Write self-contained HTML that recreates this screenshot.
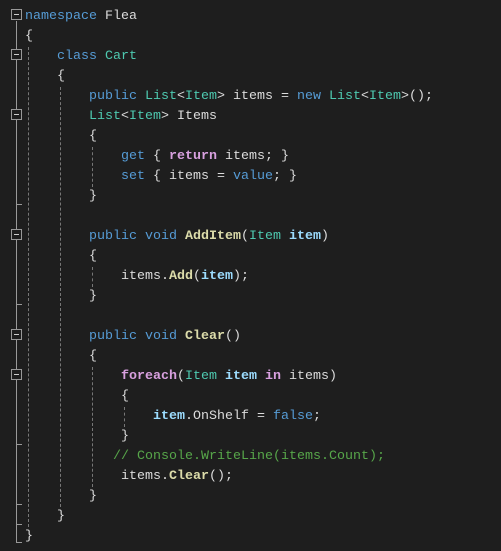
<!DOCTYPE html><html><head><meta charset="utf-8"><style>
body{margin:0;background:#1e1e1e;width:501px;height:551px;overflow:hidden;position:relative;font-family:"Liberation Mono",monospace;font-size:13.33px;color:#dcdcdc}
#w{position:absolute;left:0;top:2px;width:501px;height:549px}
.l{position:absolute;left:25px;height:20px;line-height:20px;white-space:pre}
.k{color:#569cd6}.t{color:#4ec9b0}.m{color:#dcdcaa;font-weight:bold}.p{color:#9cdcfe;font-weight:bold}.f{color:#d8a0df;font-weight:bold}.c{color:#57a64a}
.box{position:absolute;left:11px;width:9px;height:9px;border:1px solid #999;background:#1e1e1e}
.box:after{content:"";position:absolute;left:2px;top:4px;width:5px;height:1px;background:#ccc}
.vl{position:absolute;left:16px;width:1px;background:#999}
.tk{position:absolute;left:16px;width:6px;height:1px;background:#999}
.g{position:absolute;width:0;border-left:1px dashed #777}
</style></head><body><div id="w">
<div class="vl" style="top:19px;height:521px"></div>
<div class="tk" style="top:202px"></div><div class="tk" style="top:302px"></div><div class="tk" style="top:442px"></div><div class="tk" style="top:502px"></div><div class="tk" style="top:522px"></div><div class="tk" style="top:540px"></div>
<div class="box" style="top:7px"></div><div class="box" style="top:47px"></div><div class="box" style="top:107px"></div><div class="box" style="top:227px"></div><div class="box" style="top:327px"></div><div class="box" style="top:367px"></div>
<div class="g" style="left:28px;top:45px;height:480px"></div>
<div class="g" style="left:60px;top:85px;height:420px"></div>
<div class="g" style="left:92px;top:145px;height:40px"></div>
<div class="g" style="left:92px;top:265px;height:20px"></div>
<div class="g" style="left:92px;top:365px;height:120px"></div>
<div class="g" style="left:124px;top:405px;height:20px"></div>
<div class="l" style="top:5px"><span class="k">namespace</span> Flea</div>
<div class="l" style="top:25px">{</div>
<div class="l" style="top:45px">    <span class="k">class</span> <span class="t">Cart</span></div>
<div class="l" style="top:65px">    {</div>
<div class="l" style="top:85px">        <span class="k">public</span> <span class="t">List</span>&lt;<span class="t">Item</span>&gt; items = <span class="k">new</span> <span class="t">List</span>&lt;<span class="t">Item</span>&gt;();</div>
<div class="l" style="top:105px">        <span class="t">List</span>&lt;<span class="t">Item</span>&gt; Items</div>
<div class="l" style="top:125px">        {</div>
<div class="l" style="top:145px">            <span class="k">get</span> { <span class="f">return</span> items; }</div>
<div class="l" style="top:165px">            <span class="k">set</span> { items = <span class="k">value</span>; }</div>
<div class="l" style="top:185px">        }</div>
<div class="l" style="top:225px">        <span class="k">public</span> <span class="k">void</span> <span class="m">AddItem</span>(<span class="t">Item</span> <span class="p">item</span>)</div>
<div class="l" style="top:245px">        {</div>
<div class="l" style="top:265px">            items.<span class="m">Add</span>(<span class="p">item</span>);</div>
<div class="l" style="top:285px">        }</div>
<div class="l" style="top:325px">        <span class="k">public</span> <span class="k">void</span> <span class="m">Clear</span>()</div>
<div class="l" style="top:345px">        {</div>
<div class="l" style="top:365px">            <span class="f">foreach</span>(<span class="t">Item</span> <span class="p">item</span> <span class="f">in</span> items)</div>
<div class="l" style="top:385px">            {</div>
<div class="l" style="top:405px">                <span class="p">item</span>.OnShelf = <span class="k">false</span>;</div>
<div class="l" style="top:425px">            }</div>
<div class="l" style="top:445px;left:113px"><span class="c">// Console.WriteLine(items.Count);</span></div>
<div class="l" style="top:465px">            items.<span class="m">Clear</span>();</div>
<div class="l" style="top:485px">        }</div>
<div class="l" style="top:505px">    }</div>
<div class="l" style="top:525px">}</div>
</div></body></html>
